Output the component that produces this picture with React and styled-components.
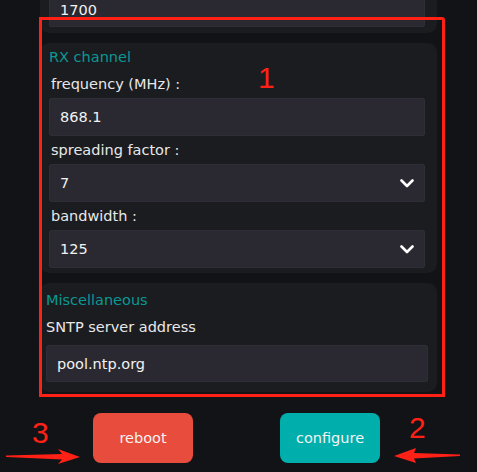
import React from 'react'
import styled, { createGlobalStyle } from 'styled-components'

const GlobalStyle = createGlobalStyle`
    html, body {
        margin: 0;
        padding: 0;
        background: #111317;
        overflow: hidden;
    }
    body {
        font-family: "DejaVu Sans", "Open Sans", sans-serif;
    }
`

const RED = '#ff2116'

const Chevron = () => (
    <svg width="14" height="9" viewBox="0 0 14 9">
        <polyline points="1.5,1.5 7,7 12.5,1.5" fill="none" stroke="#fff" strokeWidth="2.6" strokeLinecap="round" strokeLinejoin="round" />
    </svg>
)

const ArrowRight = () => (
    <svg width="76" height="16" viewBox="0 0 76 16">
        <polygon points="0,6.5 56,5 52,0 74,8 52,15 56,10.5 0,8" fill={RED} />
    </svg>
)

const ArrowLeft = () => (
    <svg width="66" height="16" viewBox="0 0 66 16">
        <polygon points="66,6.5 20,5 22,0 0,8 22,15 20,10.5 66,8" fill={RED} />
    </svg>
)

const App = () => {
    return (
        <Page>
            <GlobalStyle />
            <Column>
                <Card $pad="0 12px 6px 9px">
                    <Field $value>1700</Field>
                </Card>
                <Card $pad="4px 12px 5px 9px" $top="10px">
                    <Title>RX channel</Title>
                    <Label $first>frequency (MHz) :</Label>
                    <Field>868.1</Field>
                    <Label>spreading factor :</Label>
                    <Field>7<Chevron /></Field>
                    <Label>bandwidth :</Label>
                    <Field>125<Chevron /></Field>
                </Card>
                <Card $pad="7px 9px 10px 6px" $top="10px">
                    <Title>Miscellaneous</Title>
                    <Label $misc>SNTP server address</Label>
                    <Field $misc>pool.ntp.org</Field>
                </Card>
                <Buttons>
                    <Button $bg="#e74c3c">reboot</Button>
                    <Button $bg="#00aeac">configure</Button>
                </Buttons>
            </Column>

            <Box />
            <Mark $x="258px" $y="63px">1</Mark>
            <Mark $x="409px" $y="413px">2</Mark>
            <Mark $x="32px" $y="418px">3</Mark>
            <ArrowSpot $x="6px" $y="449px"><ArrowRight /></ArrowSpot>
            <ArrowSpot $x="394px" $y="448px"><ArrowLeft /></ArrowSpot>
        </Page>
    )
}

export default App

const Page = styled.div`
    position: relative;
    width: 477px;
    height: 472px;
    overflow: hidden;
    background: #111317;
`

const Column = styled.div`
    width: 397px;
    margin: -11px auto 0 40px;
    display: flex;
    flex-direction: column;
`

const Card = styled.section`
    background: #1a1c20;
    border-radius: 9px;
    padding: ${p => p.$pad};
    margin-top: ${p => p.$top || 0};
    display: flex;
    flex-direction: column;
`

const Title = styled.div`
    color: #0a9893;
    font-size: 14.5px;
    line-height: 20px;
`

const Label = styled.div`
    color: #e8e8e8;
    font-size: 14.5px;
    line-height: 28px;
    padding-left: ${p => (p.$misc ? '0' : '2px')};
    margin-top: ${p => (p.$first ? '3px' : p.$misc ? '3px' : '0')};
    margin-bottom: ${p => (p.$misc ? '4px' : '0')};
`

const Field = styled.div`
    height: 38px;
    box-sizing: border-box;
    background: #2a2931;
    border: 1px solid #2f2e36;
    border-radius: 2px;
    padding: 0 10px;
    display: flex;
    align-items: center;
    justify-content: space-between;
    color: #f2f2f2;
    font-size: 14.5px;
    ${p => p.$value && 'align-items: flex-end; padding-bottom: 8px;'}
    ${p => p.$misc && 'height: 37px;'}
`

const Buttons = styled.div`
    display: flex;
    gap: 87px;
    padding: 21px 0 0 53px;
`

const Button = styled.button`
    width: 100px;
    height: 50px;
    border: none;
    border-radius: 8px;
    background: ${p => p.$bg};
    color: #f4f4f4;
    font-family: "DejaVu Sans", "Open Sans", sans-serif;
    font-size: 14.5px;
`

const Box = styled.div`
    position: absolute;
    left: 39px;
    top: 17px;
    width: 400px;
    height: 374px;
    border: 3px solid ${RED};
    border-top-right-radius: 3px;
`

const Mark = styled.div`
    position: absolute;
    left: ${p => p.$x};
    top: ${p => p.$y};
    color: ${RED};
    font-family: "Liberation Sans", sans-serif;
    font-size: 30px;
    line-height: 1;
`

const ArrowSpot = styled.div`
    position: absolute;
    left: ${p => p.$x};
    top: ${p => p.$y};
    line-height: 0;
`
